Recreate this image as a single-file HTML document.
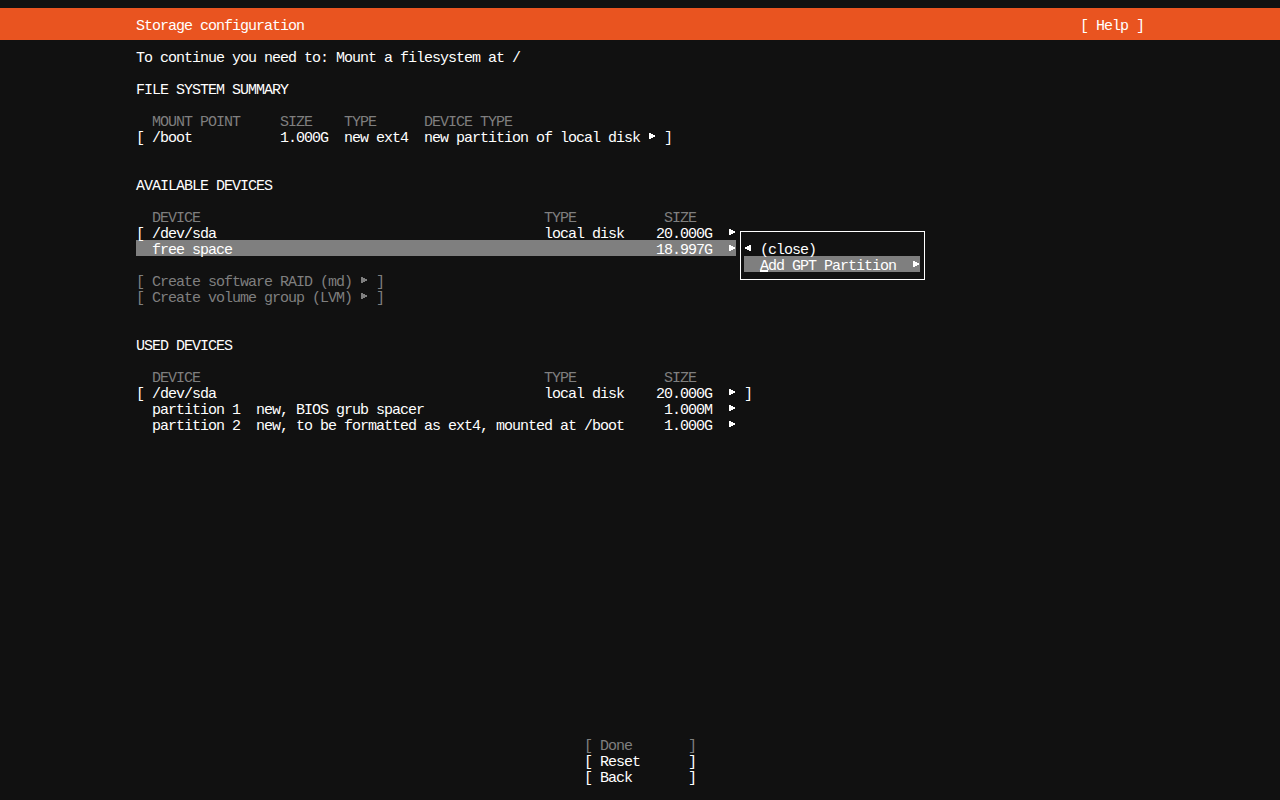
<!DOCTYPE html>
<html><head><meta charset="utf-8"><title>Storage configuration</title>
<style>
html,body{margin:0;padding:0;background:#111111;}
body{width:1280px;height:800px;position:relative;overflow:hidden;font-family:"Liberation Mono",monospace;}
.t{position:absolute;white-space:pre;font-size:15.0px;letter-spacing:-1.0015px;line-height:16px;height:16px;color:#fff;}
.d{color:#7f7f7f;}
.hdr{position:absolute;left:0;top:8px;width:1280px;height:32px;background:#e95420;}
.hl{position:absolute;background:#7f7f7f;}
.box{position:absolute;border:1px solid #fff;}
</style></head><body>
<div class="hdr"></div>
<div class="hl" style="left:136px;top:240px;width:600px;height:16px"></div>
<div class="box" style="left:740px;top:231px;width:183px;height:47px"></div>
<div class="hl" style="left:744px;top:256px;width:176px;height:16px"></div>

<div class="t" style="left:136px;top:19.0px">Storage configuration</div>
<div class="t" style="left:1080px;top:19.0px">[ Help ]</div>
<div class="t" style="left:136px;top:51.0px">To continue you need to: Mount a filesystem at /</div>
<div class="t" style="left:136px;top:83.0px">FILE SYSTEM SUMMARY</div>
<div class="t d" style="left:152px;top:115.0px">MOUNT POINT</div>
<div class="t d" style="left:280px;top:115.0px">SIZE</div>
<div class="t d" style="left:344px;top:115.0px">TYPE</div>
<div class="t d" style="left:424px;top:115.0px">DEVICE TYPE</div>
<div class="t" style="left:136px;top:131.0px">[ /boot</div>
<div class="t" style="left:280px;top:131.0px">1.000G</div>
<div class="t" style="left:344px;top:131.0px">new ext4</div>
<div class="t" style="left:424px;top:131.0px">new partition of local disk</div>
<div class="t" style="left:664px;top:131.0px">]</div>
<div class="t" style="left:136px;top:179.0px">AVAILABLE DEVICES</div>
<div class="t d" style="left:152px;top:211.0px">DEVICE</div>
<div class="t d" style="left:544px;top:211.0px">TYPE</div>
<div class="t d" style="left:664px;top:211.0px">SIZE</div>
<div class="t" style="left:136px;top:227.0px">[ /dev/sda</div>
<div class="t" style="left:544px;top:227.0px">local disk</div>
<div class="t" style="left:656px;top:227.0px">20.000G</div>
<div class="t" style="left:152px;top:243.0px">free space</div>
<div class="t" style="left:656px;top:243.0px">18.997G</div>
<div class="t d" style="left:136px;top:275.0px">[ Create software RAID (md)</div>
<div class="t d" style="left:376px;top:275.0px">]</div>
<div class="t d" style="left:136px;top:291.0px">[ Create volume group (LVM)</div>
<div class="t d" style="left:376px;top:291.0px">]</div>
<div class="t" style="left:136px;top:339.0px">USED DEVICES</div>
<div class="t d" style="left:152px;top:371.0px">DEVICE</div>
<div class="t d" style="left:544px;top:371.0px">TYPE</div>
<div class="t d" style="left:664px;top:371.0px">SIZE</div>
<div class="t" style="left:136px;top:387.0px">[ /dev/sda</div>
<div class="t" style="left:544px;top:387.0px">local disk</div>
<div class="t" style="left:656px;top:387.0px">20.000G</div>
<div class="t" style="left:744px;top:387.0px">]</div>
<div class="t" style="left:152px;top:403.0px">partition 1  new, BIOS grub spacer</div>
<div class="t" style="left:664px;top:403.0px">1.000M</div>
<div class="t" style="left:152px;top:419.0px">partition 2  new, to be formatted as ext4, mounted at /boot</div>
<div class="t" style="left:664px;top:419.0px">1.000G</div>
<div class="t" style="left:760px;top:243.0px">(close)</div>
<div class="t d" style="left:584px;top:739.0px">[ Done       ]</div>
<div class="t" style="left:584px;top:755.0px">[ Reset      ]</div>
<div class="t" style="left:584px;top:771.0px">[ Back       ]</div>
<div class="t" style="left:760px;top:259.0px">Add GPT Partition</div>
<div style="position:absolute;left:760px;top:270px;width:8px;height:2px;background:#fff"></div>
<svg style="position:absolute;left:649px;top:133px" width="6" height="6" viewBox="0 0 6 6" shape-rendering="crispEdges"><path d="M0 0H2V1H4V2H6V4H4V5H2V6H0Z" fill="#ffffff"/></svg>
<svg style="position:absolute;left:729px;top:229px" width="6" height="6" viewBox="0 0 6 6" shape-rendering="crispEdges"><path d="M0 0H2V1H4V2H6V4H4V5H2V6H0Z" fill="#ffffff"/></svg>
<svg style="position:absolute;left:729px;top:245px" width="6" height="6" viewBox="0 0 6 6" shape-rendering="crispEdges"><path d="M0 0H2V1H4V2H6V4H4V5H2V6H0Z" fill="#ffffff"/></svg>
<svg style="position:absolute;left:361px;top:277px" width="6" height="6" viewBox="0 0 6 6" shape-rendering="crispEdges"><path d="M0 0H2V1H4V2H6V4H4V5H2V6H0Z" fill="#7f7f7f"/></svg>
<svg style="position:absolute;left:361px;top:293px" width="6" height="6" viewBox="0 0 6 6" shape-rendering="crispEdges"><path d="M0 0H2V1H4V2H6V4H4V5H2V6H0Z" fill="#7f7f7f"/></svg>
<svg style="position:absolute;left:729px;top:389px" width="6" height="6" viewBox="0 0 6 6" shape-rendering="crispEdges"><path d="M0 0H2V1H4V2H6V4H4V5H2V6H0Z" fill="#ffffff"/></svg>
<svg style="position:absolute;left:729px;top:405px" width="6" height="6" viewBox="0 0 6 6" shape-rendering="crispEdges"><path d="M0 0H2V1H4V2H6V4H4V5H2V6H0Z" fill="#ffffff"/></svg>
<svg style="position:absolute;left:729px;top:421px" width="6" height="6" viewBox="0 0 6 6" shape-rendering="crispEdges"><path d="M0 0H2V1H4V2H6V4H4V5H2V6H0Z" fill="#ffffff"/></svg>
<svg style="position:absolute;left:745px;top:245px" width="6" height="6" viewBox="0 0 6 6" shape-rendering="crispEdges"><path d="M6 0V6H4V5H2V4H0V2H2V1H4V0Z" fill="#ffffff"/></svg>
<svg style="position:absolute;left:913px;top:261px" width="6" height="6" viewBox="0 0 6 6" shape-rendering="crispEdges"><path d="M0 0H2V1H4V2H6V4H4V5H2V6H0Z" fill="#ffffff"/></svg>
</body></html>
